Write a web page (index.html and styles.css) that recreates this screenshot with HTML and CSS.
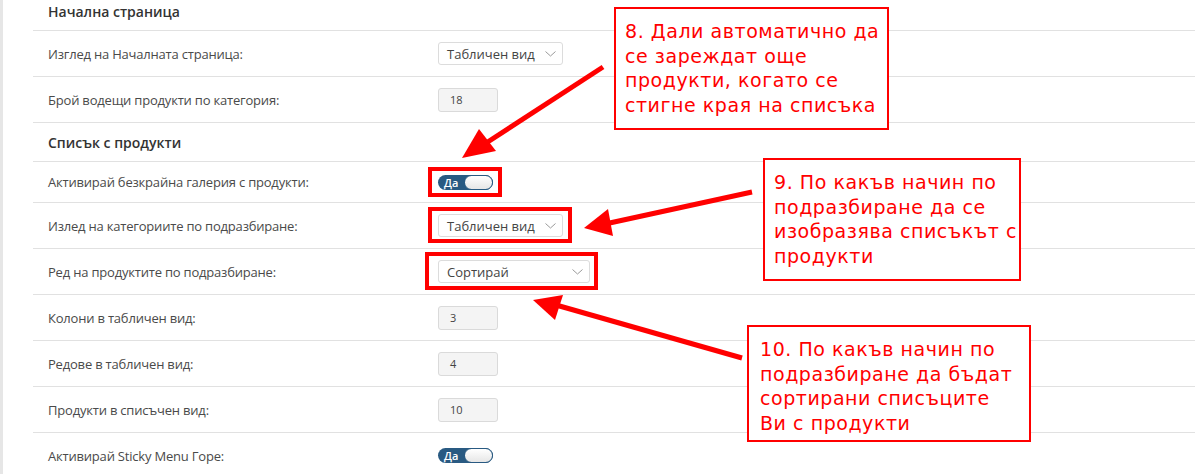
FILE: index.html
```html
<!DOCTYPE html>
<html lang="bg">
<head>
    <meta charset="UTF-8">
    <title>Настройки на продукти</title>
    <link rel="stylesheet" href="styles.css">
</head>
<body>
    <div class="page">
        <div class="settings">
            <!-- Начална страница -->
            <div class="section-title first">Начална страница</div>
            <div class="row">
                <div class="label">Изглед на Началната страница:</div>
                <div class="select"><span>Табличен вид</span><svg class="chev" width="11" height="6" viewBox="0 0 11 6"><polyline points="0.5,0.5 5.5,5 10.5,0.5"/></svg></div>
            </div>
            <div class="row">
                <div class="label">Брой водещи продукти по категория:</div>
                <div class="num">18</div>
            </div>

            <!-- Списък с продукти -->
            <div class="section-title">Списък с продукти</div>
            <div class="row short">
                <div class="label">Активирай безкрайна галерия с продукти:</div>
                <div class="toggle"><span>Да</span><i class="knob"></i></div>
            </div>
            <div class="row">
                <div class="label">Излед на категориите по подразбиране:</div>
                <div class="select"><span>Табличен вид</span><svg class="chev" width="11" height="6" viewBox="0 0 11 6"><polyline points="0.5,0.5 5.5,5 10.5,0.5"/></svg></div>
            </div>
            <div class="row">
                <div class="label">Ред на продуктите по подразбиране:</div>
                <div class="select wide"><span>Сортирай</span><svg class="chev" width="11" height="6" viewBox="0 0 11 6"><polyline points="0.5,0.5 5.5,5 10.5,0.5"/></svg></div>
            </div>
            <div class="row">
                <div class="label">Колони в табличен вид:</div>
                <div class="num">3</div>
            </div>
            <div class="row">
                <div class="label">Редове в табличен вид:</div>
                <div class="num">4</div>
            </div>
            <div class="row">
                <div class="label">Продукти в списъчен вид:</div>
                <div class="num">10</div>
            </div>
            <div class="row">
                <div class="label">Активирай Sticky Menu Горе:</div>
                <div class="toggle"><span>Да</span><i class="knob"></i></div>
            </div>
        </div>

        <!-- Annotations -->
        <div class="mark mark-1"></div>
        <div class="mark mark-2"></div>
        <div class="mark mark-3"></div>

        <svg class="arrows" width="1195" height="474" viewBox="0 0 1195 474">
            <line x1="603" y1="67" x2="480" y2="147"/>
            <polygon points="462,158 479,129 496,151"/>
            <line x1="752" y1="192" x2="605" y2="224"/>
            <polygon points="584,228 608,209 613,236"/>
            <line x1="742" y1="358" x2="556" y2="305"/>
            <polygon points="533,300 563,295 555,320"/>
        </svg>

        <div class="note note-8">8. Дали автоматично да<br>се зареждат още<br>продукти, когато се<br>стигне края на списъка</div>
        <div class="note note-9">9. По какъв начин по<br>подразбиране да се<br>изобразява списъкът с<br>продукти</div>
        <div class="note note-10">10. По какъв начин по<br>подразбиране да бъдат<br>сортирани списъците<br>Ви с продукти</div>
    </div>
</body>
</html>
```

FILE: styles.css
```css
/* Global Styles */
body {
    margin: 0;
    padding: 0;
    background: #fff;
    font-family: 'Open Sans', sans-serif;
    color: #444;
    overflow: hidden;
}

.page {
    position: relative;
    height: 474px;
    border-left: 3px solid #e6e6e6;
    padding-left: 30px;
    overflow: hidden;
}

.settings {
    display: flex;
    flex-direction: column;
}

.section-title {
    height: 38px;
    display: flex;
    align-items: center;
    padding-left: 15px;
    border-bottom: 1px solid #e1e1e1;
    font-size: 14px;
    font-weight: 600;
    color: #333;
}

.section-title.first {
    margin-top: -8px;
}

.row {
    height: 45px;
    display: flex;
    align-items: center;
    padding-left: 15px;
    border-bottom: 1px solid #e1e1e1;
}

.row.short {
    height: 40px;
}

.label {
    width: 390px;
    font-size: 13px;
    color: #4a4a4a;
    letter-spacing: -0.2px;
}

/* Controls */
.select {
    box-sizing: border-box;
    width: 125px;
    height: 23px;
    display: flex;
    align-items: center;
    justify-content: space-between;
    padding: 0 6px 0 8px;
    border: 1px solid #dcdcdc;
    border-radius: 3px;
    background: #fff;
    font-size: 13px;
    color: #444;
}

.select.wide {
    width: 152px;
}

.chev polyline {
    fill: none;
    stroke: #9a9a9a;
    stroke-width: 1;
}

.num {
    box-sizing: border-box;
    width: 60px;
    height: 24px;
    display: flex;
    align-items: center;
    padding-left: 11px;
    border: 1px solid #dadada;
    border-radius: 3px;
    background: #f4f4f4;
    font-size: 11px;
    color: #444;
}

.toggle {
    box-sizing: border-box;
    width: 55px;
    height: 15px;
    display: flex;
    align-items: center;
    justify-content: space-between;
    padding-left: 6px;
    border-radius: 8px;
    background: #295a82;
    color: #fff;
    font-size: 11px;
    font-weight: 600;
    line-height: 1;
}

.knob {
    box-sizing: border-box;
    width: 29px;
    height: 15px;
    border: 1px solid #295a82;
    border-radius: 8px;
    background: linear-gradient(#ffffff, #e6e6e6);
}

/* Annotations */
.mark {
    position: absolute;
    box-sizing: border-box;
    border: 4px solid #f00;
}

.mark-1 { left: 425px; top: 167px; width: 74px; height: 30px; }
.mark-2 { left: 425px; top: 207px; width: 144px; height: 36px; }
.mark-3 { left: 422px; top: 252px; width: 173px; height: 38px; }

.arrows {
    position: absolute;
    left: -3px;
    top: 0;
}

.arrows line {
    stroke: #f00;
    stroke-width: 5;
}

.arrows polygon {
    fill: #f00;
}

.note {
    position: absolute;
    box-sizing: border-box;
    border: 2px solid #f00;
    background: #fff;
    color: #f00;
    font-family: 'DejaVu Sans', sans-serif;
    font-size: 19px;
    line-height: 24.5px;
    letter-spacing: 0.55px;
    white-space: nowrap;
}

.note-8 { left: 611px; top: 7px; width: 275px; height: 123px; padding: 10px 9px; }
.note-9 { left: 760px; top: 158px; width: 258px; height: 123px; padding: 10px 9px; }
.note-10 { left: 744px; top: 325px; width: 284px; height: 117px; padding: 10px 11px; }
```
